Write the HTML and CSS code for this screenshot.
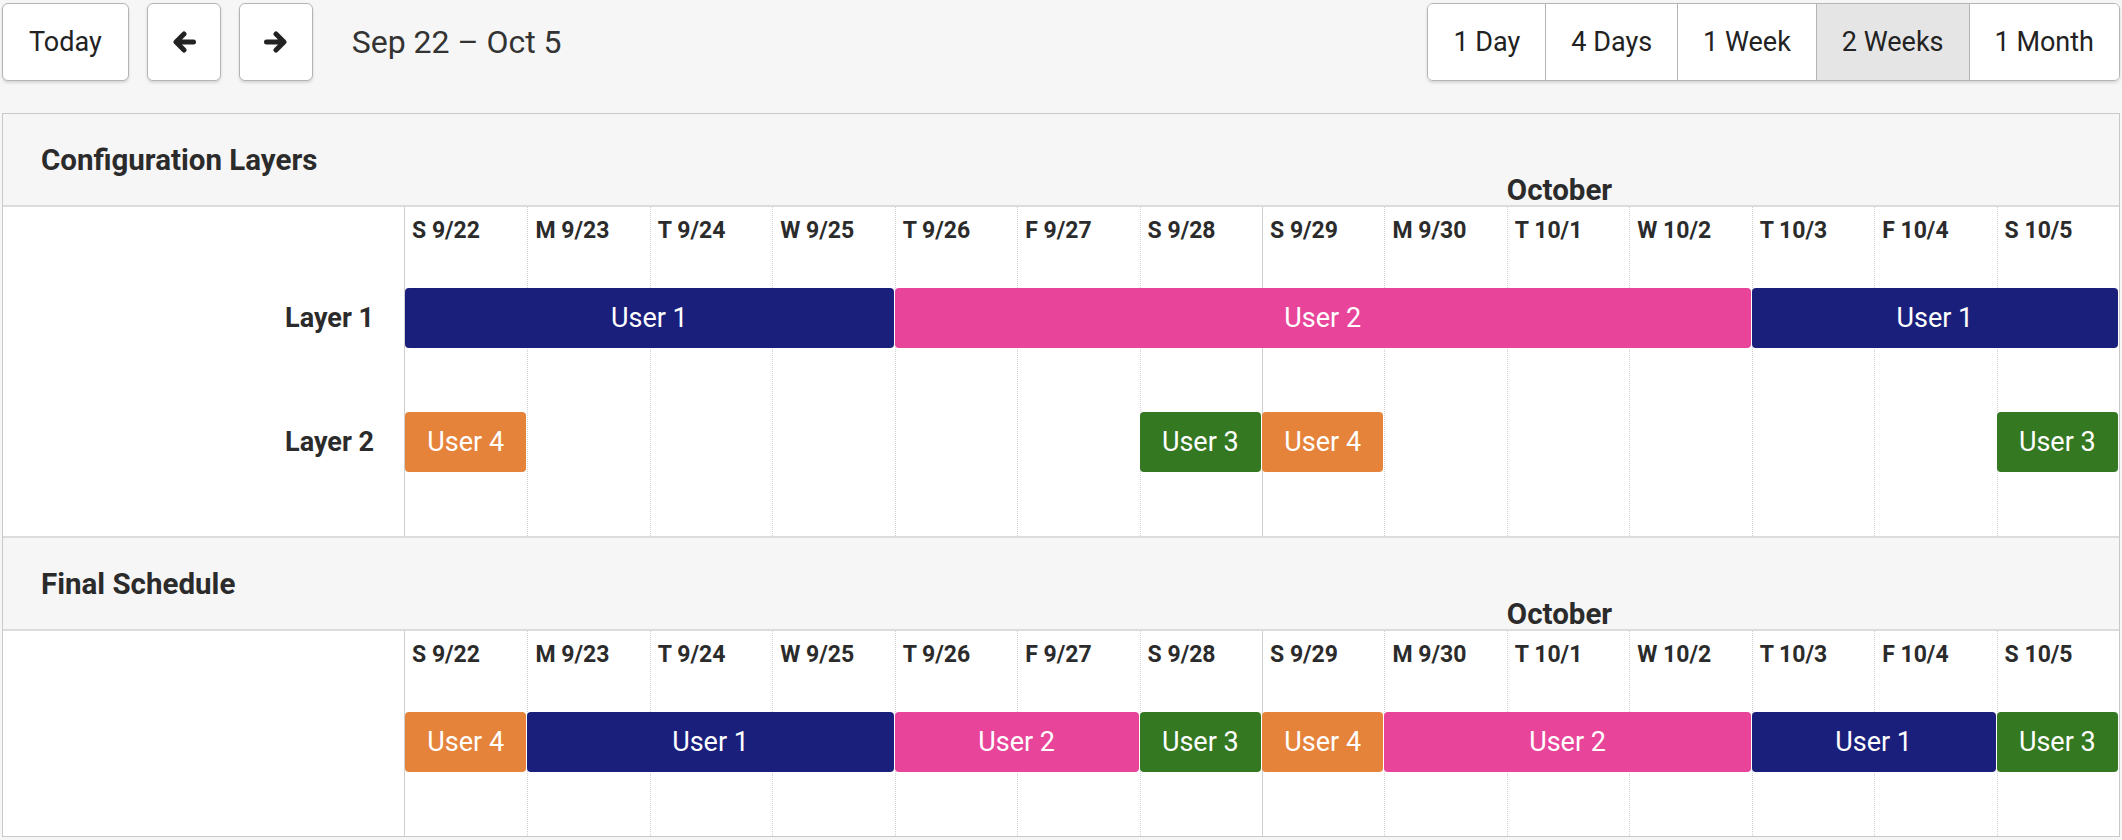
FILE: index.html
```html
<!DOCTYPE html>
<html lang="en">
<head>
<meta charset="utf-8">
<title>Schedule</title>
<link rel="stylesheet" href="styles.css">
</head>
<body>
<div class="page">
  <div class="toolbar">
    <div class="nav">
      <button class="btn">Today</button>
      <button class="btn icon-btn" aria-label="Previous">
        <svg width="24" height="22" viewBox="0 0 24 22"><path d="M21.5 11H5M12 3L4 11L12 19" fill="none" stroke="#222" stroke-width="5" stroke-linecap="round" stroke-linejoin="round"/></svg>
      </button>
      <button class="btn icon-btn" aria-label="Next">
        <svg width="24" height="22" viewBox="0 0 24 22"><path d="M2.5 11H19M12 3L20 11L12 19" fill="none" stroke="#222" stroke-width="5" stroke-linecap="round" stroke-linejoin="round"/></svg>
      </button>
      <span class="range">Sep 22 – Oct 5</span>
    </div>
    <div class="seg">
      <button class="seg-btn">1 Day</button>
      <button class="seg-btn">4 Days</button>
      <button class="seg-btn">1 Week</button>
      <button class="seg-btn active">2 Weeks</button>
      <button class="seg-btn">1 Month</button>
    </div>
  </div>

  <div class="panel">
    <section class="sec">
      <div class="sec-head grid">
        <h2 class="sec-title">Configuration Layers</h2>
        <div class="month">October</div>
      </div>
      <div class="sec-body grid rows-2">
        <div class="labelcol"></div>
        <div class="day first">S 9/22</div>
        <div class="day">M 9/23</div>
        <div class="day">T 9/24</div>
        <div class="day">W 9/25</div>
        <div class="day">T 9/26</div>
        <div class="day">F 9/27</div>
        <div class="day">S 9/28</div>
        <div class="day week">S 9/29</div>
        <div class="day">M 9/30</div>
        <div class="day">T 10/1</div>
        <div class="day">W 10/2</div>
        <div class="day">T 10/3</div>
        <div class="day">F 10/4</div>
        <div class="day">S 10/5</div>

        <div class="layer-label r2">Layer 1</div>
        <div class="bar u1 r2" style="grid-column: 2 / 6">User 1</div>
        <div class="bar u2 r2" style="grid-column: 6 / 13">User 2</div>
        <div class="bar u1 r2" style="grid-column: 13 / 16">User 1</div>

        <div class="layer-label r3">Layer 2</div>
        <div class="bar u4 r3" style="grid-column: 2 / 3">User 4</div>
        <div class="bar u3 r3" style="grid-column: 8 / 9">User 3</div>
        <div class="bar u4 r3" style="grid-column: 9 / 10">User 4</div>
        <div class="bar u3 r3" style="grid-column: 15 / 16">User 3</div>
      </div>
    </section>

    <section class="sec">
      <div class="sec-head grid">
        <h2 class="sec-title">Final Schedule</h2>
        <div class="month">October</div>
      </div>
      <div class="sec-body grid rows-1">
        <div class="labelcol"></div>
        <div class="day first">S 9/22</div>
        <div class="day">M 9/23</div>
        <div class="day">T 9/24</div>
        <div class="day">W 9/25</div>
        <div class="day">T 9/26</div>
        <div class="day">F 9/27</div>
        <div class="day">S 9/28</div>
        <div class="day week">S 9/29</div>
        <div class="day">M 9/30</div>
        <div class="day">T 10/1</div>
        <div class="day">W 10/2</div>
        <div class="day">T 10/3</div>
        <div class="day">F 10/4</div>
        <div class="day">S 10/5</div>

        <div class="bar u4 r2" style="grid-column: 2 / 3">User 4</div>
        <div class="bar u1 r2" style="grid-column: 3 / 6">User 1</div>
        <div class="bar u2 r2" style="grid-column: 6 / 8">User 2</div>
        <div class="bar u3 r2" style="grid-column: 8 / 9">User 3</div>
        <div class="bar u4 r2" style="grid-column: 9 / 10">User 4</div>
        <div class="bar u2 r2" style="grid-column: 10 / 13">User 2</div>
        <div class="bar u1 r2" style="grid-column: 13 / 15">User 1</div>
        <div class="bar u3 r2" style="grid-column: 15 / 16">User 3</div>
      </div>
    </section>
  </div>
</div>
</body>
</html>
```

FILE: styles.css
```css
html, body {
  margin: 0;
  background: #f6f6f6;
}

body {
  font-family: Roboto, "Liberation Sans", Arial, sans-serif;
  color: #2b2b2b;
}

.page {
  padding: 3px 2px 0;
}

/* ---------- toolbar ---------- */
.toolbar {
  display: flex;
  justify-content: space-between;
  align-items: center;
  height: 78px;
}

.nav {
  display: flex;
  align-items: center;
  gap: 18px;
}

.btn {
  height: 78px;
  box-sizing: border-box;
  background: #fff;
  border: 1px solid #b4b4b4;
  border-radius: 6px;
  box-shadow: 0 2px 3px rgba(0, 0, 0, 0.13);
  font-family: Roboto, "Liberation Sans", Arial, sans-serif;
  font-size: 27px;
  font-weight: 400;
  color: #222;
  padding: 0 26px;
}

.icon-btn {
  width: 74px;
  padding: 0;
  display: flex;
  align-items: center;
  justify-content: center;
}

.range {
  margin-left: 21px;
  font-size: 32px;
  color: #333;
}

.seg {
  display: flex;
  height: 78px;
  box-sizing: border-box;
  border: 1px solid #b4b4b4;
  border-radius: 6px;
  overflow: hidden;
  box-shadow: 0 2px 3px rgba(0, 0, 0, 0.13);
}

.seg-btn {
  border: 0;
  border-left: 1px solid #b4b4b4;
  background: #fff;
  font-family: Roboto, "Liberation Sans", Arial, sans-serif;
  font-size: 27px;
  color: #222;
  padding: 0 25px;
}

.seg-btn:first-child {
  border-left: 0;
}

.seg-btn.active {
  background: #e5e5e5;
}

/* ---------- panel ---------- */
.panel {
  margin-top: 32px;
  background: #fff;
  border: 1px solid #c9c9c9;
}

.grid {
  display: grid;
  grid-template-columns: 402px repeat(14, minmax(0, 1fr));
}

.sec-head {
  height: 91px;
  background: #f6f6f6;
  border-bottom: 2px solid #dcdcdc;
}

.sec + .sec .sec-head {
  border-top: 2px solid #dcdcdc;
}

.sec-title {
  grid-column: 1 / 11;
  grid-row: 1;
  align-self: center;
  margin: 0;
  padding-left: 38px;
  font-size: 29.5px;
  font-weight: 700;
  color: #2b2b2b;
}

.month {
  grid-column: 11 / 16;
  grid-row: 1;
  align-self: end;
  font-size: 29.5px;
  font-weight: 700;
  line-height: 1;
  margin-bottom: 0;
  color: #2b2b2b;
}

.sec-body.rows-2 {
  grid-template-rows: 81px 124px 124px;
}

.sec-body.rows-1 {
  grid-template-rows: 81px 124px;
}

.labelcol {
  grid-column: 1;
  grid-row: 1 / -1;
  border-right: 1px solid #cfcfcf;
}

.day {
  grid-row: 1 / -1;
  border-left: 1px dotted #d2d2d2;
  padding: 10px 0 0 7px;
  font-size: 23px;
  font-weight: 700;
  line-height: 1.2;
  white-space: nowrap;
  color: #2b2b2b;
}

/* each day column sits in its own grid track */
.sec-body > .day:nth-child(2)  { grid-column: 2; }
.sec-body > .day:nth-child(3)  { grid-column: 3; }
.sec-body > .day:nth-child(4)  { grid-column: 4; }
.sec-body > .day:nth-child(5)  { grid-column: 5; }
.sec-body > .day:nth-child(6)  { grid-column: 6; }
.sec-body > .day:nth-child(7)  { grid-column: 7; }
.sec-body > .day:nth-child(8)  { grid-column: 8; }
.sec-body > .day:nth-child(9)  { grid-column: 9; }
.sec-body > .day:nth-child(10) { grid-column: 10; }
.sec-body > .day:nth-child(11) { grid-column: 11; }
.sec-body > .day:nth-child(12) { grid-column: 12; }
.sec-body > .day:nth-child(13) { grid-column: 13; }
.sec-body > .day:nth-child(14) { grid-column: 14; }
.sec-body > .day:nth-child(15) { grid-column: 15; }

.day.first {
  border-left: 0;
}

.day.week {
  border-left: 1px solid #cfcfcf;
}

.layer-label {
  grid-column: 1;
  align-self: start;
  height: 60px;
  display: flex;
  align-items: center;
  justify-content: flex-end;
  padding-right: 31px;
  font-size: 27px;
  font-weight: 700;
  color: #2b2b2b;
}

.r2 { grid-row: 2; }
.r3 { grid-row: 3; }

.bar {
  align-self: start;
  height: 60px;
  margin-right: 1px;
  border-radius: 4px;
  display: flex;
  align-items: center;
  justify-content: center;
  white-space: nowrap;
  color: #fff;
  font-size: 27px;
  font-weight: 400;
}

.u1 { background: #1b1f7c; }
.u2 { background: #e8459a; }
.u3 { background: #357822; }
.u4 { background: #e5833b; }
```
